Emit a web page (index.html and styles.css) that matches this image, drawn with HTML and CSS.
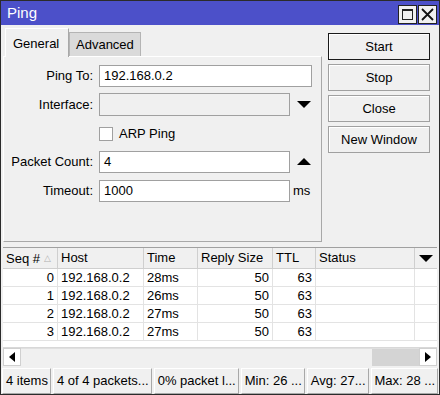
FILE: index.html
```html
<!DOCTYPE html>
<html lang="en">
<head>
    <meta charset="UTF-8">
    <title>Ping</title>
    <link rel="stylesheet" href="styles.css">
</head>
<body>

<div class="window">
    <div class="titlebar">
        <span class="title">Ping</span>
        <span class="winButton"><span class="maxIcon"></span></span>
        <span class="winButton closeIcon">
            <svg width="15" height="15" viewBox="0 0 15 15"><path d="M2 2L13 13M13 2L2 13" stroke="#111" stroke-width="1.8"/></svg>
        </span>
    </div>

    <div class="top">
        <div class="tabArea">
            <div class="tabs">
                <div class="tab active">General</div>
                <div class="tab">Advanced</div>
            </div>
            <div class="panel">
                <div class="row">
                    <label>Ping To:</label>
                    <div class="field wide">192.168.0.2</div>
                </div>
                <div class="row">
                    <label>Interface:</label>
                    <div class="field disabled"></div>
                    <span class="arrow down"></span>
                </div>
                <div class="row check">
                    <span class="checkbox"></span>
                    <span>ARP Ping</span>
                </div>
                <div class="row">
                    <label>Packet Count:</label>
                    <div class="field">4</div>
                    <span class="arrow up"></span>
                </div>
                <div class="row">
                    <label>Timeout:</label>
                    <div class="field">1000</div>
                    <span class="unit">ms</span>
                </div>
            </div>
        </div>

        <div class="buttons">
            <button class="btn default">Start</button>
            <button class="btn">Stop</button>
            <button class="btn">Close</button>
            <button class="btn">New Window</button>
        </div>
    </div>

    <div class="table">
        <div class="trow head">
            <div class="c seq">Seq # <span class="sort">&#9651;</span></div>
            <div class="c host">Host</div>
            <div class="c time">Time</div>
            <div class="c size">Reply Size</div>
            <div class="c ttl">TTL</div>
            <div class="c status">Status</div>
            <div class="c menu"><span class="arrow down"></span></div>
        </div>
        <div class="trow">
            <div class="c seq num">0</div><div class="c host">192.168.0.2</div><div class="c time">28ms</div>
            <div class="c size num">50</div><div class="c ttl num">63</div><div class="c status"></div>
        </div>
        <div class="trow">
            <div class="c seq num">1</div><div class="c host">192.168.0.2</div><div class="c time">26ms</div>
            <div class="c size num">50</div><div class="c ttl num">63</div><div class="c status"></div>
        </div>
        <div class="trow">
            <div class="c seq num">2</div><div class="c host">192.168.0.2</div><div class="c time">27ms</div>
            <div class="c size num">50</div><div class="c ttl num">63</div><div class="c status"></div>
        </div>
        <div class="trow">
            <div class="c seq num">3</div><div class="c host">192.168.0.2</div><div class="c time">27ms</div>
            <div class="c size num">50</div><div class="c ttl num">63</div><div class="c status"></div>
        </div>
        <div class="filler"></div>
        <div class="hscroll">
            <div class="sbtn"><span class="arrow left"></span></div>
            <div class="track"><div class="thumb"></div></div>
            <div class="sbtn"><span class="arrow right"></span></div>
        </div>
    </div>

    <div class="statusbar">
        <div class="cell">4 items</div>
        <div class="cell">4 of 4 packets...</div>
        <div class="cell">0% packet l...</div>
        <div class="cell">Min: 26 ...</div>
        <div class="cell">Avg: 27...</div>
        <div class="cell">Max: 28 ...</div>
    </div>
</div>

</body>
</html>
```

FILE: styles.css
```css
body {
    margin: 0;
    padding: 0;
    font-family: "Liberation Sans", Arial, sans-serif;
    font-size: 13px;
    color: #000;
}

.window {
    width: 440px;
    height: 395px;
    box-sizing: border-box;
    border: 1px solid #2b2b2b;
    background-color: #f0f0f0;
    display: flex;
    flex-direction: column;
}

/* Title bar */
.titlebar {
    height: 24px;
    background-color: #4c50c9;
    display: flex;
    align-items: center;
    padding: 0 2px 0 6px;
}

.title {
    color: #fff;
    font-size: 15px;
    flex: 1;
    margin-top: -1px;
}

.winButton {
    width: 17px;
    height: 17px;
    border: 1px solid #222;
    background-color: #f0f0f0;
    margin-left: 1px;
    display: flex;
    justify-content: center;
    align-items: center;
    margin-top: 4px;
}

.maxIcon {
    width: 11px;
    height: 11px;
    border: 1px solid #222;
    border-top-width: 2px;
    box-sizing: border-box;
}

/* Upper part */
.top {
    display: flex;
    height: 222px;
}

.tabArea {
    width: 319px;
    margin-left: 2px;
    display: flex;
    flex-direction: column;
}

.tabs {
    display: flex;
    height: 31px;
    align-items: flex-end;
    padding-left: 2px;
}

.tab {
    height: 24px;
    line-height: 24px;
    padding: 0 6px;
    border: 1px solid #b4b4b4;
    border-bottom: none;
    background-color: #dadada;
    box-sizing: border-box;
}

.tab.active {
    height: 29px;
    line-height: 30px;
    width: 64px;
    background-color: #f0f0f0;
    border-color: #fff #a8a8a8 #f0f0f0 #fff;
    padding: 0 0 0 7px;
    position: relative;
    top: 1px;
}

.panel {
    flex: 1;
    border: 1px solid #a8a8a8;
    border-top-color: #fff;
    border-left-color: #fff;
    padding-top: 8px;
}

.row {
    display: flex;
    align-items: center;
    height: 22px;
    margin-bottom: 7px;
}

.row label {
    width: 89px;
    text-align: right;
    margin-right: 6px;
}

.field {
    width: 191px;
    height: 22px;
    box-sizing: border-box;
    border: 1px solid #a0a0a0;
    background-color: #fff;
    padding: 0 4px;
    line-height: 20px;
}

.field.wide {
    width: 213px;
}

.field.disabled {
    background-color: #f0f0f0;
    height: 23px;
}

.row.check {
    padding-left: 95px;
    margin-top: 1px;
    margin-bottom: 6px;
}

.checkbox {
    width: 14px;
    height: 14px;
    box-sizing: border-box;
    border: 1px solid #a0a0a0;
    background-color: #fff;
    margin-right: 6px;
}

.unit {
    margin-left: 3px;
}

.arrow {
    display: inline-block;
    width: 0;
    height: 0;
    border-left: 7px solid transparent;
    border-right: 7px solid transparent;
}

.row .arrow {
    margin-left: 7px;
}

.arrow.down {
    border-top: 7px solid #000;
}

.arrow.up {
    border-bottom: 7px solid #000;
}

.arrow.left {
    border: 5px solid transparent;
    border-right: 6px solid #000;
    border-left: none;
}

.arrow.right {
    border: 5px solid transparent;
    border-left: 6px solid #000;
    border-right: none;
}

/* Side buttons */
.buttons {
    display: flex;
    flex-direction: column;
    gap: 4px;
    margin-left: 6px;
    padding-top: 8px;
}

.btn {
    width: 102px;
    height: 27px;
    font-family: inherit;
    font-size: 13px;
    background-color: #f0f0f0;
    border: 1px solid #a0a0a0;
    padding: 0;
    box-shadow: inset 1px 1px 0 #fff;
}

.btn.default {
    border-color: #1a1a1a;
}

/* Table */
.table {
    margin: 5px 2px 0 2px;
    border-top: 1px solid #a0a0a0;
    display: flex;
    flex-direction: column;
    height: 120px;
    background-color: #fff;
}

.trow {
    display: flex;
    height: 18px;
    line-height: 18px;
    border-bottom: 1px solid #e3e3e3;
    box-sizing: border-box;
}

.trow.head {
    height: 21px;
    line-height: 20px;
    background-color: #f0f0f0;
    border-bottom: 1px solid #cfcfcf;
}

.c {
    box-sizing: border-box;
    border-right: 1px solid #e3e3e3;
    padding: 0 3px;
    white-space: nowrap;
    overflow: hidden;
}

.head .c {
    border-right-color: #cfcfcf;
}

.num {
    text-align: right;
}

.seq { width: 55px; }
.host { width: 86px; }
.time { width: 54px; }
.size { width: 75px; }
.ttl { width: 43px; }
.status { width: 99px; }
.menu { width: 22px; border-right: none; display: flex; align-items: center; justify-content: center; }

.sort {
    color: #b0b0b0;
    font-size: 9px;
    vertical-align: 2px;
}

.filler {
    flex: 1;
}

.hscroll {
    display: flex;
    height: 18px;
    background-color: #f0f0f0;
    border-top: 1px solid #d8d8d8;
}

.sbtn {
    width: 18px;
    display: flex;
    align-items: center;
    justify-content: center;
    background-color: #fff;
    border: 1px solid #d0d0d0;
    box-sizing: border-box;
}

.track {
    flex: 1;
    display: flex;
    justify-content: flex-end;
    border-top: 1px solid #e0e0e0;
}

.thumb {
    width: 47px;
    background-color: #d4d4d4;
}

/* Status bar */
.statusbar {
    display: flex;
    height: 26px;
    margin-top: 2px;
    padding: 0 0 0 1px;
}

.cell {
    border: 1px solid #a8a8a8;
    border-top-color: #fff;
    border-left-color: #fff;
    line-height: 24px;
    padding: 0 2px 0 3px;
    margin-right: 2px;
    white-space: nowrap;
}
```
